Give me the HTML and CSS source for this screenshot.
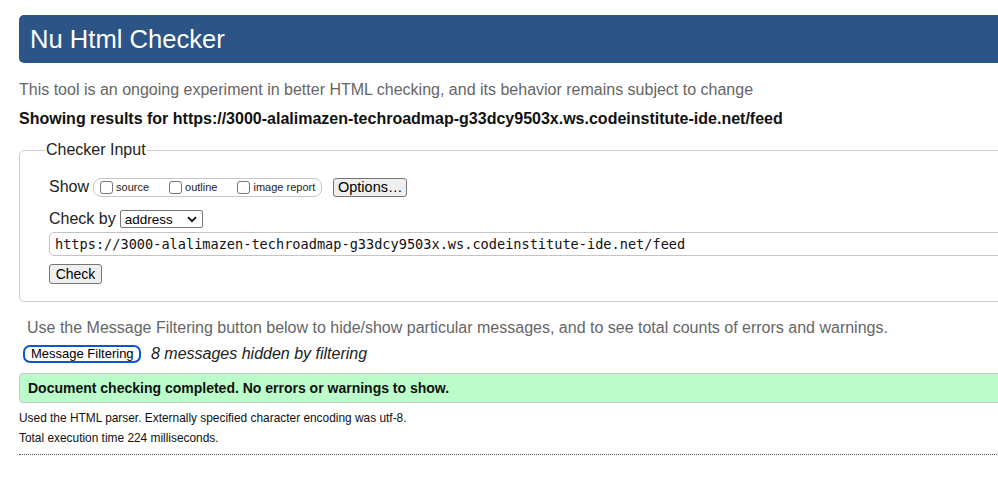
FILE: index.html
```html
<!DOCTYPE html>
<html lang="en">
<head>
<meta charset="utf-8">
<title>Nu Html Checker</title>
<link rel="stylesheet" href="styles.css">
</head>
<body>
<div class="page">
  <h1 class="title">Nu Html Checker</h1>
  <p class="intro">This tool is an ongoing experiment in better HTML checking, and its behavior remains subject to change</p>
  <p class="showing">Showing results for https://3000-alalimazen-techroadmap-g33dcy9503x.ws.codeinstitute-ide.net/feed</p>
  <fieldset class="checker">
    <legend class="legend">Checker Input</legend>
    <div class="row show-row">
      <span class="label">Show</span>
      <span class="opts">
        <label class="opt"><span class="cb"></span>source</label>
        <label class="opt"><span class="cb"></span>outline</label>
        <label class="opt"><span class="cb"></span>image report</label>
      </span>
      <span class="btn options">Options…</span>
    </div>
    <div class="row by-row">
      <span class="label">Check by</span>
      <span class="select">address<svg class="chev" width="10" height="7" viewBox="0 0 10 7"><path d="M1 1.2 L5 5.2 L9 1.2" fill="none" stroke="#111" stroke-width="1.8"/></svg></span>
    </div>
    <div class="url">https://3000-alalimazen-techroadmap-g33dcy9503x.ws.codeinstitute-ide.net/feed</div>
    <div class="row check-row"><span class="btn check">Check</span></div>
  </fieldset>
  <p class="usefilter">Use the Message Filtering button below to hide/show particular messages, and to see total counts of errors and warnings.</p>
  <div class="filter-row">
    <span class="filter-btn">Message Filtering</span>
    <span class="hidden-count">8 messages hidden by filtering</span>
  </div>
  <div class="success">Document checking completed. No errors or warnings to show.</div>
  <p class="details">Used the HTML parser. Externally specified character encoding was utf-8.</p>
  <p class="details">Total execution time 224 milliseconds.</p>
  <div class="rule"></div>
</div>
</body>
</html>
```
FILE: styles.css
```css
html, body {
  margin: 0;
  padding: 0;
  background: #fff;
  overflow: hidden;
}
body {
  font-family: "Liberation Sans", Arial, sans-serif;
  color: #000;
}
.page {
  width: 1200px;
  padding: 15px 0 0 19px;
}
.title {
  margin: 0;
  height: 48px;
  line-height: 48px;
  padding-left: 11px;
  background: #2c5487;
  color: #fff;
  font-size: 25.6px;
  font-weight: normal;
  border-radius: 5px 0 0 5px;
}
.intro {
  margin: 17px 0 0;
  font-size: 16px;
  line-height: 20px;
  color: #666;
}
.showing {
  margin: 9px 0 0;
  font-size: 16px;
  line-height: 20px;
  font-weight: bold;
  color: #111;
}
.checker {
  margin: 11px 0 0;
  padding: 17px 0 17px 29px;
  border: 1px solid #ccc;
  border-radius: 5px 0 0 5px;
}
.legend {
  margin-left: -4px;
  padding: 0 1px;
  font-size: 16px;
  line-height: 20px;
  color: #222;
}
.row {
  display: flex;
  align-items: center;
  height: 20px;
}
.label {
  font-size: 16px;
  line-height: 20px;
  color: #222;
}
.opts {
  display: flex;
  align-items: center;
  height: 17px;
  margin-left: 4px;
  padding: 0 6px 0 6px;
  border: 1px solid #c8c8c8;
  border-radius: 8px;
  font-size: 11px;
  color: #222;
}
.opt {
  display: flex;
  align-items: center;
  margin-right: 20px;
}
.opt:last-child { margin-right: 0; }
.cb {
  width: 11px;
  height: 11px;
  border: 1px solid #767676;
  border-radius: 3px;
  margin-right: 3px;
  background: #fff;
}
.btn {
  display: inline-flex;
  align-items: center;
  justify-content: center;
  box-sizing: border-box;
  background: #efefef;
  border: 1px solid #767676;
  border-radius: 3px;
  color: #000;
}
.options {
  margin-left: 11px;
  width: 74px;
  height: 19px;
  font-size: 14.5px;
}
.by-row {
  margin-top: 12px;
}
.select {
  display: inline-flex;
  align-items: center;
  justify-content: space-between;
  box-sizing: border-box;
  margin-left: 4px;
  width: 83px;
  height: 18px;
  padding: 0 5px 0 4px;
  border: 1px solid #767676;
  border-radius: 2px;
  font-size: 13.5px;
  background: #fff;
}
.url {
  margin-top: 3px;
  box-sizing: border-box;
  height: 24px;
  line-height: 22px;
  padding-left: 5px;
  border: 1px solid #c4c4c4;
  border-radius: 5px 0 0 5px;
  font-family: "DejaVu Sans Mono", "Liberation Mono", monospace;
  font-size: 13.6px;
  color: #111;
}
.check-row {
  margin-top: 8px;
}
.check {
  width: 53px;
  height: 20px;
  font-size: 14px;
}
.usefilter {
  margin: 16px 0 0;
  padding-left: 8px;
  font-size: 16px;
  line-height: 20px;
  color: #666;
}
.filter-row {
  display: flex;
  align-items: center;
  margin-top: 7px;
  margin-left: 4px;
  height: 18px;
}
.filter-btn {
  box-sizing: border-box;
  height: 18px;
  width: 118px;
  line-height: 14px;
  padding-left: 6px;
  border: 2px solid #0b57d0;
  border-radius: 7px;
  font-size: 13px;
  color: #000;
}
.hidden-count {
  margin-left: 10px;
  font-style: italic;
  font-size: 16px;
  color: #222;
}
.success {
  margin-top: 10px;
  box-sizing: border-box;
  height: 30px;
  line-height: 28px;
  padding-left: 8px;
  background: #bbfcca;
  border: 1px solid #c8c8c8;
  border-radius: 4px 0 0 4px;
  font-weight: bold;
  font-size: 14px;
  color: #111;
}
.details {
  margin: 8px 0 0;
  font-size: 11.9px;
  line-height: 14px;
  color: #111;
}
.details + .details {
  margin-top: 6px;
}
.rule {
  margin-top: 9px;
  border-top: 1px dotted #555;
}
```
